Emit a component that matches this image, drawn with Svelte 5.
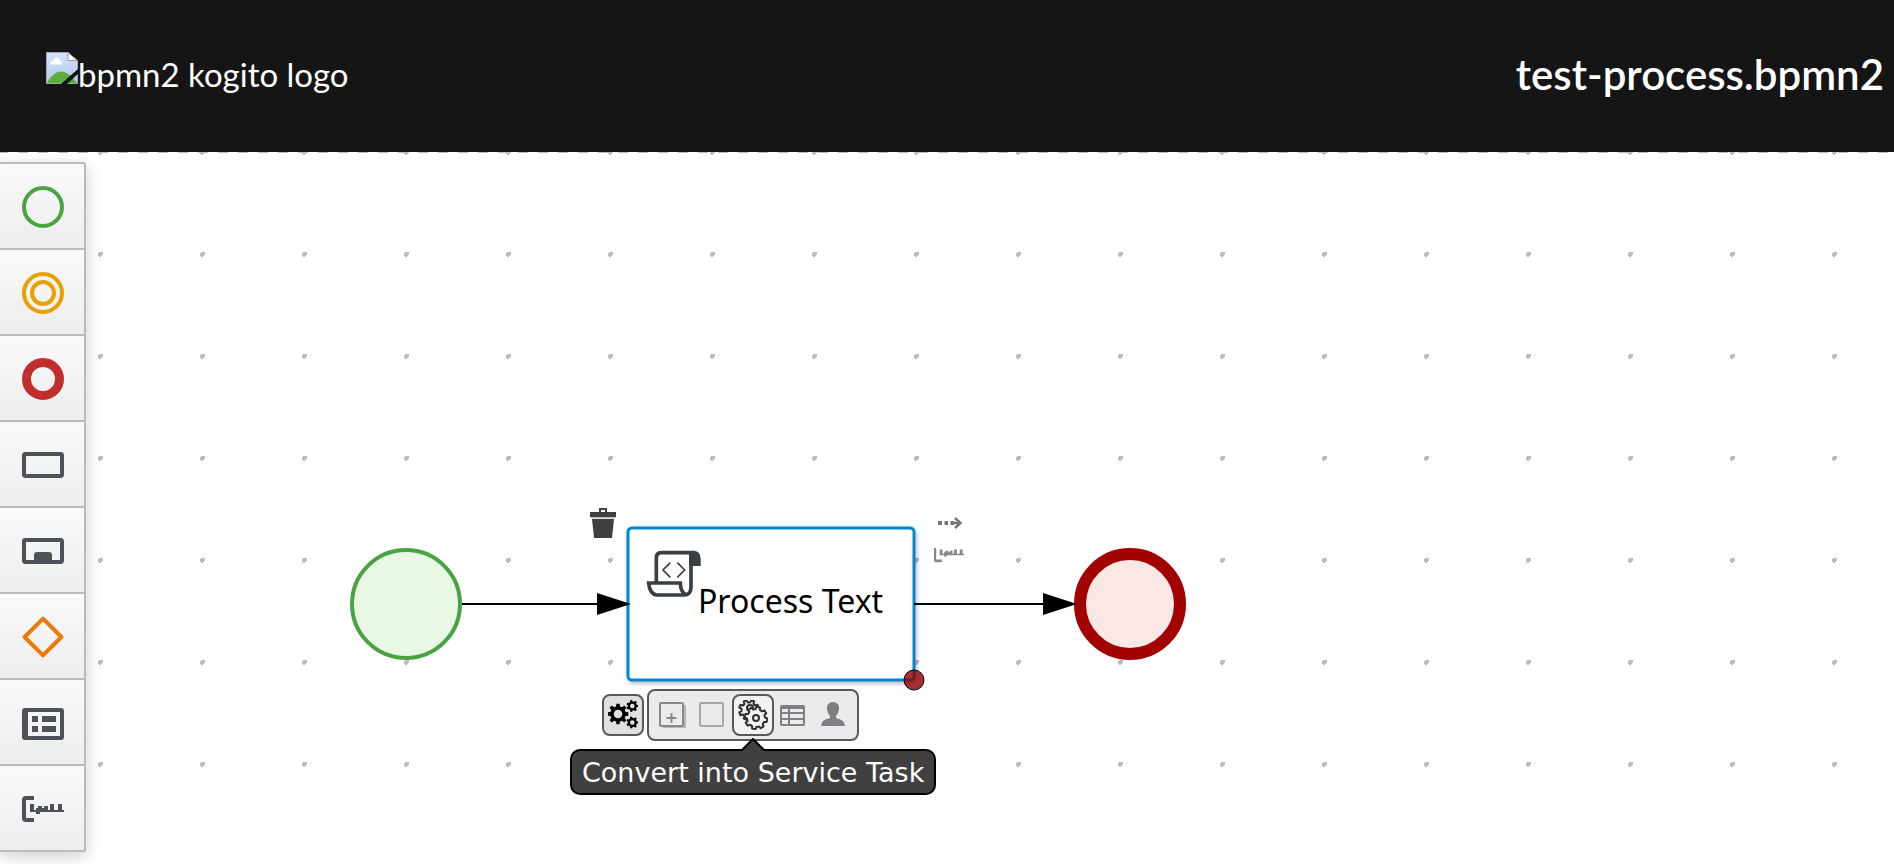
<script>
  const palette = ['Start events', 'Intermediate events', 'End events', 'Activities', 'Sub-processes', 'Gateways', 'Data objects', 'Text annotation'];

  function gear(cx, cy, outer, inner, teeth, phase = 0) {
    const step = (Math.PI * 2) / teeth;
    const points = [];
    for (let i = 0; i < teeth; i++) {
      for (const [radius, offset] of [[inner, -0.32], [outer, -0.2], [outer, 0.2], [inner, 0.32]]) {
        const angle = phase + step * (i + offset);
        points.push(`${(cx + radius * Math.cos(angle)).toFixed(2)} ${(cy + radius * Math.sin(angle)).toFixed(2)}`);
      }
    }
    return `M${points.join('L')}Z`;
  }

  function hole(cx, cy, r) {
    return `M${cx - r} ${cy}a${r} ${r} 0 1 0 ${2 * r} 0a${r} ${r} 0 1 0 ${-2 * r} 0Z`;
  }

  const morphGears =
    gear(10, 14, 10.5, 7.8, 8) + hole(10, 14, 4.3) +
    gear(24.3, 6, 6, 4.6, 7) + hole(24.3, 6, 2.3) +
    gear(24.3, 22.5, 6, 4.6, 7) + hole(24.3, 22.5, 2.3);
</script>

{#snippet annotation()}
  <path d="M6 4H2Q0 4 0 6V15Q0 17 2 17H6V15H2V6H6Z" />
  <path d="M4 8H6V11H7V10H8V9H10V10H11V9H13V11H14V8H16V11H18V8H20V11H21V12H9V13H7V12H4Z" />
{/snippet}

<div class="page">
  <header>
    <div class="logo">
      <svg width="32" height="32" viewBox="0 0 32 32" aria-hidden="true">
        <defs>
          <linearGradient id="sky" x2="0" y2="1">
            <stop stop-color="#d3e2fb" />
            <stop offset="1" stop-color="#b4c8f0" />
          </linearGradient>
        </defs>
        <path d="M.5 .5H22L31.500 9V31.500H.5Z" fill="url(#sky)" stroke="#a5a8ae" />
        <path d="M4 12.500Q3 9 7 9Q8 5.500 11 5.500Q14 6 14.500 9Q17 10 16 12.500Z" fill="#fff" />
        <path d="M1 31Q7 19.500 15 19.500Q20 19.500 26 25L31 31Z" fill="#5aad38" />
        <path d="M15 32L32 17V22L21 32Z" fill="#151515" />
        <path d="M22 .5V8.500H31.500Z" fill="#fff" stroke="#999" />
      </svg>
      <span>bpmn2 kogito logo</span>
    </div>
    <h1>test-process.bpmn2</h1>
  </header>

  <main>
    <svg class="diagram" role="img" aria-label="Process diagram">
      <defs>
        <pattern id="grid" x="98" y="-2" width="102" height="102" patternUnits="userSpaceOnUse">
          <path d="M1 0H5V3H4V4H3V5H1V4H0V1H1Z" fill="#bcbcbc" />
        </pattern>
        <filter id="shade" x="-10%" y="-10%" width="120%" height="120%">
          <feDropShadow dx="1" dy="2" stdDeviation="2" flood-opacity=".3" />
        </filter>
      </defs>
      <rect width="100%" height="100%" fill="url(#grid)" />
      <line x1="-2" y1=".5" x2="100%" y2=".5" stroke="#bcbcbc" stroke-dasharray="10 10" />

      <circle cx="406" cy="452" r="54" fill="#e8f8e5" stroke="#4aa341" stroke-width="4" />
      <rect x="628" y="376" width="286" height="152" rx="4" fill="#fff" stroke="#0088ce" stroke-width="3" filter="url(#shade)" />
      <circle cx="1130" cy="452" r="50" fill="#fae8e6" stroke="#a30000" stroke-width="12" />
      <g stroke="#000" stroke-width="2">
        <path d="M462 452H600M914 452H1045" />
        <path d="M597 441L631 452L597 463ZM1043 441L1077 452L1043 463Z" stroke="none" />
      </g>

      <g transform="translate(580 338) scale(.33333)" fill="none" stroke="#393f44" stroke-width="11">
        <path d="M229 276V204Q229 188 244 188H345M333 188V290Q333 315 312 315H230Q209 312 206 279H301Q302 306 316 313" />
        <path d="M327 183H342Q362 184 362 206V228H327Z" fill="#393f44" stroke="none" />
        <path d="M271 218L249 240L271 262M292 218L314 240L292 262" stroke-width="5" />
      </g>
      <text x="698" y="461">Process Text</text>
      <circle cx="914" cy="528" r="10" fill="#8b0000" fill-opacity=".8" stroke="#000" />
    </svg>

    <nav class="palette" aria-label="Shapes">
      {#each palette as name, i}
        <button type="button" aria-label={name}>
          <svg viewBox="0 0 21 21" width="42" height="42" fill="#4d5258">
            {#if i === 0}
              <circle cx="10.5" cy="10.5" r="9.5" fill="none" stroke="#4aa341" stroke-width="2" />
            {:else if i === 1}
              <g fill="none" stroke="#e6a000" stroke-width="2">
                <circle cx="10.5" cy="10.5" r="9.5" />
                <circle cx="10.5" cy="10.5" r="5.5" />
              </g>
            {:else if i === 2}
              <circle cx="10.5" cy="10.5" r="8.25" fill="none" stroke="#c12e2e" stroke-width="4.5" />
            {:else if i === 3}
              <rect x="1" y="5" width="19" height="11" rx=".7" fill="none" stroke="#4d5258" stroke-width="2" />
            {:else if i === 4}
              <rect x="1" y="5" width="19" height="11" rx=".7" fill="none" stroke="#4d5258" stroke-width="2" />
              <path d="M6 16V12.500Q6 11 7.500 11H13.500Q15 11 15 12.500V16Z" />
            {:else if i === 5}
              <path d="M10.500 1.300L19.700 10.500L10.500 19.700L1.300 10.500Z" fill="none" stroke="#ec7a08" stroke-width="2" stroke-linejoin="round" />
            {:else if i === 6}
              <path fill-rule="evenodd" d="M1.500 3H19.500Q21 3 21 4.500V17.500Q21 19 19.500 19H1.500Q0 19 0 17.500V4.500Q0 3 1.500 3ZM3 5V17H19V5ZM5 7H8V10H5ZM10 7H17V10H10ZM5 12H8V15H5ZM10 12H17V15H10Z" />
            {:else}
              {@render annotation()}
            {/if}
          </svg>
        </button>
      {/each}
    </nav>

    <button type="button" class="action delete" aria-label="Delete">
      <svg viewBox="0 0 30 30" width="30" height="30" fill="#404040">
        <path fill-rule="evenodd" d="M2 4H11V0H19V4H28V9H2ZM13 2V4H17V2Z" />
        <path d="M3 9H27V10.500H3Z" fill="#bbb" />
        <path d="M4 11H26L24 30H6Z" />
      </svg>
    </button>

    <div class="connectors">
      <button type="button" class="action" aria-label="Create sequence flow">
        <svg viewBox="0 0 30 30" width="30" height="30" fill="#74777b">
          <path d="M4 13H8V17H4ZM10.500 13H14V17H10.500ZM16.500 13H20V17H16.500Z" />
          <path d="M20 15H26M21 10L26.500 15L21 20" fill="none" stroke="#74777b" stroke-width="2.5" />
        </svg>
      </button>
      <button type="button" class="action" aria-label="Create text annotation">
        <svg viewBox="0 4 21 21" width="30" height="30" fill="#85888c">
          <path d="M0 4H1.500V12H5.500V14H2Q0 14 0 12Z" />
          <path d="M4 5H6V8H7V7H8V6H10V7H11V6H13V8H14V5H16V8H18V5H20V8H21V9H9V10H7V9H4Z" />
        </svg>
      </button>
    </div>

    <div class="toolbar">
      <button type="button" class="tool framed dark" aria-label="Convert">
        <svg viewBox="0 0 30 30" width="30" height="30">
          <path fill-rule="evenodd" d={morphGears} />
        </svg>
      </button>
      <div class="options">
        <button type="button" class="tool" aria-label="Convert into reusable sub-process">
          <svg viewBox="0 0 30 30" width="30" height="30" fill="none" stroke="#85898d">
            <path d="M27 5V27H5" stroke="#b4b6b8" stroke-width="2" />
            <rect x="2" y="3" width="23" height="23" rx="1" stroke-width="2" />
            <path d="M13.500 13V23M8.500 18H18.500" stroke-width="2" />
          </svg>
        </button>
        <button type="button" class="tool" aria-label="Convert into task">
          <svg viewBox="0 0 30 30" width="30" height="30" fill="none" stroke="#a8a8a8" stroke-width="2">
            <rect x="2" y="3" width="23" height="23" rx="1" />
          </svg>
        </button>
        <button type="button" class="tool framed" aria-label="Convert into Service Task" aria-describedby="tip">
          <svg viewBox="0 0 30 30" width="30" height="30" fill="#f2f2f2" stroke="#303030" stroke-width="2" stroke-linejoin="round">
            <path d={gear(11, 10, 10, 7.5, 8, 0.39)} />
            <circle cx="12" cy="8" r="3" />
            <path d={gear(18, 18, 11.3, 9, 8, 0.2)} />
            <circle cx="18" cy="18" r="3" />
          </svg>
        </button>
        <button type="button" class="tool" aria-label="Convert into business rule task">
          <svg viewBox="0 0 30 30" width="30" height="30" fill="none" stroke="#7c8085" stroke-width="2">
            <rect x="3" y="6" width="23" height="19" rx="1" />
            <path d="M3 7.500H26" stroke-width="3" />
            <path d="M3 13H26M3 19H26M11 7V25" />
          </svg>
        </button>
        <button type="button" class="tool" aria-label="Convert into user task">
          <svg viewBox="0 0 30 30" width="30" height="30" fill="#7c8085">
            <path d="M15 2C19 2 21.500 5 21 9C20.500 13 19 15 18 16V18Q27 20 27 26H3Q3 20 12 18V16C11 15 9.500 13 9 9C8.500 5 11 2 15 2Z" />
          </svg>
        </button>
      </div>
    </div>

    <div class="tooltip" id="tip" role="tooltip">
      Convert into Service Task
      <svg viewBox="0 0 24 14" width="24" height="14" aria-hidden="true">
        <path d="M1 14V12L12 1L23 12V14Z" fill="#404040" />
        <path d="M0 12H1L12 1L23 12H24" fill="none" stroke="#000" stroke-width="2" />
      </svg>
    </div>
  </main>
</div>

<style>
  :global(body) {
    margin: 0;
  }

  .page {
    display: flex;
    flex-direction: column;
    min-height: 100vh;
    background: #fff;
  }

  header {
    display: flex;
    align-items: flex-start;
    justify-content: space-between;
    padding: 52px 10px 52px 46px;
    background: #151515;
    color: #fff;
    font-family: Lato, sans-serif;
    line-height: 44px;
  }

  .logo {
    display: flex;
    align-items: flex-start;
    min-height: 48px;
    font-size: 33px;
  }

  h1 {
    margin: 0;
    font-size: 42px;
    font-weight: 600;
  }

  main {
    position: relative;
    flex: 1;
    overflow: hidden;
    padding: 10px 0 12px;
  }

  .diagram {
    position: absolute;
    inset: 0;
    width: 100%;
    height: 100%;
  }

  .diagram text {
    font: 32px "Noto Sans", "Open Sans", sans-serif;
  }

  button {
    padding: 0;
    border: 0;
    background: none;
    cursor: pointer;
  }

  button svg {
    display: block;
  }

  .palette {
    position: relative;
    display: flex;
    flex-direction: column;
    width: fit-content;
    border: solid #bbb;
    border-width: 0 2px 2px 0;
    border-radius: 0 2px 2px 0;
    box-shadow: 0 4px 16px rgba(0, 0, 0, 0.2);
  }

  .palette button {
    padding: 22px 20px 20px 22px;
    border-top: 2px solid #bbb;
    background: linear-gradient(#fafafa, #ededed);
  }

  .delete {
    position: absolute;
    left: 588px;
    top: 356px;
  }

  .connectors {
    position: absolute;
    left: 934px;
    top: 356px;
    display: grid;
    gap: 10px;
  }

  .connectors .action {
    background: #fff;
  }

  .toolbar {
    position: absolute;
    left: 602px;
    top: 537px;
    display: flex;
    align-items: center;
    gap: 3px;
  }

  .options {
    display: flex;
    padding: 3px 4px;
    border: 2px solid #595959;
    border-radius: 8px;
    background: #ebebeb;
  }

  .tool {
    display: grid;
    place-items: center;
    width: 40px;
    height: 42px;
  }

  .framed {
    box-sizing: border-box;
    width: 42px;
    border: 2px solid #595959;
    border-radius: 8px;
    background: #f2f2f2;
  }

  .options .framed {
    margin: 0 -1px;
  }

  .dark {
    background: #e0e0e0;
  }

  .tooltip {
    position: absolute;
    left: 570px;
    top: 597px;
    padding: 2px 10px 0;
    border: 2px solid #000;
    border-radius: 10px;
    background: #404040;
    color: #fff;
    font: 27px/40px Verdana, "DejaVu Sans", sans-serif;
    white-space: nowrap;
  }

  .tooltip svg {
    position: absolute;
    left: calc(50% - 12px);
    top: -13px;
  }
</style>
